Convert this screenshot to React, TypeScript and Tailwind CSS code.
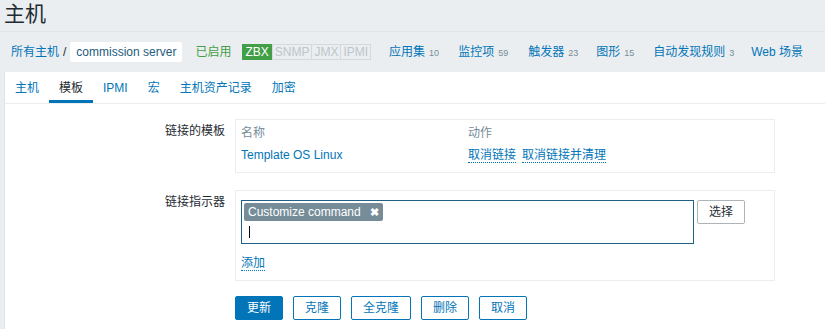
import React from "react";

const blue = "text-[#0275b8]";

function NavLink({ label, count, className = "" }: { label: string; count?: string; className?: string }) {
  return (
    <span className={`flex items-baseline ${className}`}>
      <span className={blue}>{label}</span>
      {count && <span className="ml-[4px] text-[9px] text-[#768d99]">{count}</span>}
    </span>
  );
}

export default function App() {
  return (
    <div className="w-[825px] h-[329px] overflow-hidden bg-[#ebeef0] text-[12px] leading-[14px] text-[#1f2c33] font-['Liberation_Sans','Noto_Sans_CJK_SC',sans-serif] flex flex-col">
      {/* Title */}
      <div className="h-[32px] shrink-0 border-b border-[#dfe4e7] pl-[4px] flex items-start">
        <h1 className="text-[21px] leading-[27px] font-normal">主机</h1>
      </div>

      {/* Breadcrumb row */}
      <div className="h-[40px] shrink-0 flex items-center pl-[11px] whitespace-nowrap">
        <span className={blue}>所有主机</span>
        <span className="mx-[4px] text-[#1f2c33]">/</span>
        <span className="bg-white rounded-[2px] px-[6px] h-[20px] flex items-center text-[#245b80]">commission server</span>
        <span className="ml-[13px] text-[#429e47]">已启用</span>
        <span className="ml-[11px] flex h-[16px]">
          <span className="px-[2px] flex items-center bg-[#429e47] border border-[#429e47] text-white">ZBX</span>
          <span className="px-[2px] flex items-center border border-[#d3dadd] text-[#bcc6cb]">SNMP</span>
          <span className="px-[2px] flex items-center border border-l-0 border-[#d3dadd] text-[#bcc6cb]">JMX</span>
          <span className="px-[2px] flex items-center border border-l-0 border-[#d3dadd] text-[#bcc6cb]">IPMI</span>
        </span>
        <NavLink className="ml-[18px]" label="应用集" count="10" />
        <NavLink className="ml-[19px]" label="监控项" count="59" />
        <NavLink className="ml-[20px]" label="触发器" count="23" />
        <NavLink className="ml-[18px]" label="图形" count="15" />
        <NavLink className="ml-[19px]" label="自动发现规则" count="3" />
        <NavLink className="ml-[17px]" label="Web 场景" />
      </div>

      {/* Panel */}
      <div className="flex-1 ml-[4px] bg-white border-l border-[#dfe4e7] flex flex-col">
        {/* Tabs */}
        <div className="h-[32px] shrink-0 border-b border-[#ebeef0] flex">
          {[
            ["主机", false],
            ["模板", true],
            ["IPMI", false],
            ["宏", false],
            ["主机资产记录", false],
            ["加密", false],
          ].map(([t, active]) => (
            <div
              key={t as string}
              className={`h-[31px] px-[10px] pt-[3px] flex items-center border-b-[3px] ${
                active ? "border-[#0275b8] text-[#1f2c33]" : "border-transparent text-[#0275b8]"
              }`}
            >
              {t as string}
            </div>
          ))}
        </div>

        {/* Form */}
        <div className="pt-[15px] flex flex-col">
          {/* Linked templates */}
          <div className="flex">
            <div className="w-[230px] pr-[10px] text-right pt-[5px]">链接的模板</div>
            <div className="w-[540px] border border-[#ebeef0] px-[5px] pt-[6px] pb-[8px]">
              <div className="flex h-[14px] text-[#768d99]">
                <div className="w-[227px]">名称</div>
                <div>动作</div>
              </div>
              <div className="flex mt-[8px] h-[16px]">
                <div className={`w-[227px] ${blue}`}>Template OS Linux</div>
                <div className="flex items-start">
                  <span className={`${blue} border-b border-dotted border-[#0275b8]`}>取消链接</span>
                  <span className={`ml-[6px] ${blue} border-b border-dotted border-[#0275b8]`}>取消链接并清理</span>
                </div>
              </div>
            </div>
          </div>

          {/* Linked indicators */}
          <div className="flex mt-[17px]">
            <div className="w-[230px] pr-[10px] text-right pt-[5px]">链接指示器</div>
            <div className="w-[540px] border border-[#ebeef0] px-[5px] pt-[9px] pb-[10px]">
              <div className="flex items-start gap-[3px]">
                <div className="w-[453px] h-[44px] border border-[#1e6185] p-[2px] flex flex-col">
                  <div className="h-[18px] self-start bg-[#768d99] rounded-[2px] pl-[4px] pr-[4px] flex items-center text-white whitespace-nowrap">
                    Customize command
                    <span className="ml-[9px] text-[11px] font-bold leading-none">✖</span>
                  </div>
                  <div className="mt-[5px] ml-[5px] w-[1px] h-[12px] bg-black" />
                </div>
                <button className="h-[24px] px-[11px] border border-[#acb4b8] rounded-[2px] bg-white text-[#1f2c33] leading-[14px]">
                  选择
                </button>
              </div>
              <div className="mt-[12px]">
                <span className={`${blue} border-b border-dotted border-[#0275b8]`}>添加</span>
              </div>
            </div>
          </div>

          {/* Buttons */}
          <div className="flex mt-[15px] ml-[230px] gap-[10px]">
            <button className="h-[24px] px-[11px] rounded-[2px] bg-[#0275b8] border border-[#0275b8] text-white leading-[14px]">更新</button>
            <button className="h-[24px] px-[11px] rounded-[2px] bg-white border border-[#0275b8] text-[#0275b8] leading-[14px]">克隆</button>
            <button className="h-[24px] px-[11px] rounded-[2px] bg-white border border-[#0275b8] text-[#0275b8] leading-[14px]">全克隆</button>
            <button className="h-[24px] px-[11px] rounded-[2px] bg-white border border-[#0275b8] text-[#0275b8] leading-[14px]">删除</button>
            <button className="h-[24px] px-[11px] rounded-[2px] bg-white border border-[#0275b8] text-[#0275b8] leading-[14px]">取消</button>
          </div>
        </div>
      </div>
    </div>
  );
}
